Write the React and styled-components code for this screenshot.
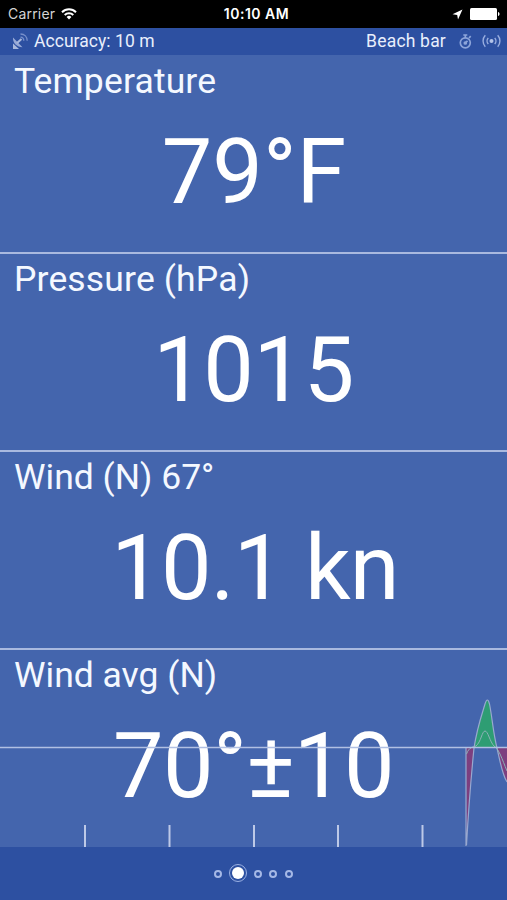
import styled, { createGlobalStyle } from "styled-components";

const GlobalStyle = createGlobalStyle`
	body {
		margin: 0;
		background: #000;
	}
`;

const Screen = styled.div`
	width: 507px;
	height: 900px;
	display: flex;
	flex-direction: column;
	overflow: hidden;
	background: #4465ad;
	color: #fff;
	font-family: Roboto, sans-serif;
`;

const StatusBar = styled.header`
	height: 28px;
	box-sizing: border-box;
	padding: 0 7px 0 8px;
	display: grid;
	grid-template-columns: 1fr auto 1fr;
	align-items: center;
	background: #000;
	font-family: Inter, sans-serif;
	font-size: 14px;
`;

const StatusGroup = styled.div`
	display: flex;
	align-items: center;
	justify-content: ${(props) => (props.$end ? "flex-end" : "flex-start")};
	gap: ${(props) => props.$gap}px;
`;

const Carrier = styled.span`
	color: #d4d4d4;
	font-size: 14px;
	line-height: 16px;
	margin-bottom: 1px;
	letter-spacing: 0.2px;
`;

const Clock = styled.span`
	padding-left: 5px;
	font-size: 14px;
	font-weight: 600;
	line-height: 16px;
	letter-spacing: 0.5px;
	margin-bottom: 1px;
`;

const InfoBar = styled.div`
	height: 27px;
	box-sizing: border-box;
	padding: 0 6px 1px 12px;
	display: flex;
	align-items: center;
	justify-content: space-between;
	background: #2d50a1;
`;

const InfoText = styled.span`
	color: #e9effc;
	font-size: 17.5px;
	line-height: 26px;
	letter-spacing: ${(props) => props.$spacing || 0}px;
	margin-right: ${(props) => props.$right || 0}px;
`;

const Panel = styled.section`
	position: relative;
	height: ${(props) => props.$height}px;
	box-sizing: border-box;
	padding-top: ${(props) => props.$top}px;
	border-bottom: ${(props) => (props.$last ? "none" : "2px solid #a9b9df")};
	display: flex;
	flex-direction: column;
`;

const PanelTitle = styled.h2`
	margin: 0 0 0 14px;
	color: #f4f8ff;
	font-size: 35.5px;
	font-weight: 400;
	line-height: 42px;
	letter-spacing: ${(props) => props.$spacing || 0}px;
	white-space: pre;
`;

const PanelValue = styled.div`
	margin-top: 18px;
	padding-left: ${(props) => props.$shift || 0}px;
	font-size: 90px;
	line-height: 106px;
	text-align: center;
	letter-spacing: ${(props) => props.$spacing || 0}px;
	white-space: pre;
`;

const Chart = styled.svg`
	position: absolute;
	left: 0;
	bottom: 0;
`;

const Footer = styled.footer`
	flex: 1;
	display: flex;
	align-items: center;
	justify-content: center;
	gap: 7.7px;
	background: #2d50a1;
`;

const Dot = styled.span`
	width: 8px;
	height: 8px;
	box-sizing: border-box;
	border: 2px solid #a5b8e6;
	border-radius: 50%;
	margin-top: 1px;
`;

const ActiveDot = styled.span`
	width: 18px;
	height: 18px;
	box-sizing: border-box;
	border: 1.5px solid #9bb1e3;
	border-radius: 50%;
	display: grid;
	place-items: center;
	margin: -1px -1px 0;

	&::before {
		content: "";
		width: 12px;
		height: 12px;
		border-radius: 50%;
		background: #fff;
	}
`;

const WifiIcon = () => (
	<svg width="16" height="12" viewBox="0 0 16 12" fill="none" stroke="#fff" strokeWidth="2">
		<path d="M1 4.2a10 10 0 0 1 14 0" />
		<path d="M3.7 7a6.2 6.2 0 0 1 8.6 0" />
		<path d="M8 11.4 5.6 9a3.5 3.5 0 0 1 4.8 0z" fill="#fff" stroke="none" />
	</svg>
);

const LocationIcon = () => (
	<svg width="11" height="11" viewBox="0 0 11 11">
		<path d="M10.5.5 6 10.5 5.2 5.9.5 5.2z" fill="#fff" />
	</svg>
);

const BatteryIcon = () => (
	<svg width="30" height="12" viewBox="0 0 30 12" fill="#fff">
		<rect width="27" height="12" rx="1.5" />
		<path d="M28 4c2 .5 2 3.5 0 4z" />
	</svg>
);

const SatelliteIcon = () => (
	<svg width="17" height="17" viewBox="0 0 17 17" fill="none" stroke="#7890cb">
		<path d="M1 4.5c-.5 5.5 4 9.7 9.5 9.7z" fill="#97a9d7" stroke="none" />
		<path d="M1 10.5v5.500h6z" fill="#a9b8dc" stroke="none" />
		<path d="m5 10 4.5-4" strokeWidth="2" stroke="#a9b8dc" />
		<path d="M8.5 4.2c2 .1 3.3 1.5 3.3 3.6M8.5 1c4 .1 6.7 2.8 6.7 6.8" strokeWidth="1.3" />
	</svg>
);

const StopwatchIcon = () => (
	<svg width="13" height="15" viewBox="0 0 13 15" fill="none" stroke="#8da5da" strokeWidth="1.7">
		<circle cx="6.3" cy="8.8" r="5" />
		<path d="M4.3 1h4M6.3 1v3M10 4l1.7-1.8M6.3 9l2.2-2.2" />
		<circle cx="6.3" cy="9" r="1" fill="#8da5da" />
	</svg>
);

const BroadcastIcon = () => (
	<svg width="19" height="14" viewBox="0 0 19 14" fill="none" stroke="#9aafe0" strokeWidth="1.4">
		<circle cx="9.5" cy="7" r="2" fill="#b3c3e9" stroke="none" />
		<path d="M6.3 4a4.3 4.3 0 0 0 0 6M12.7 4a4.3 4.3 0 0 1 0 6M3.3 1.3a8.4 8.4 0 0 0 0 11.4M15.7 1.3a8.4 8.4 0 0 1 0 11.4" />
	</svg>
);

const ticks = [85, 169.5, 254, 338, 422.5];

const WindChart = () => (
	<Chart width="507" height="197" viewBox="0 0 507 197">
		<path d="M466 98H474C472 118 469 151 466.5 195z" fill="#7d3f7f" />
		<path d="M497 98H507V132C502 124 500 111 497 98z" fill="#7d3f7f" />
		<path d="M474 98C477 78 482 64 485 54Q487.500 46 489.500 54C492 66 493 82 497 98z" fill="#2e9d73" />
		<path
			d="M466 196V98M466.500 195C469 151 472 118 474 98 477 78 482 64 485 54Q487.500 46 489.500 54C492 66 493 82 497 98 500 111 502 124 507 132"
			fill="none"
			stroke="#98a8cf"
			strokeWidth="1.2"
		/>
		<path
			d="M466.500 104C469 97 473 97 476 96 481 92 482 81 485 81S490 92 494 96C499 99 502 109 507 121"
			fill="none"
			stroke="#8bb2b7"
		/>
		<path d="M0 97.500H507" stroke="#b1c0e3" strokeWidth="1.5" />
		{ticks.map((x) => (
			<path key={x} d={`M${x} 175v22`} stroke="#bdc9e7" strokeWidth="2" />
		))}
	</Chart>
);

const readings = [
	{ title: "Temperature", value: "79°F", height: 199, top: 5, titleSpacing: 0.15, shift: 1 },
	{ title: "Pressure (hPa)", value: "1015", height: 198, top: 4, titleSpacing: 0.15, spacing: -0.4, shift: 0 },
	{ title: "Wind (N) 67°", value: "10.1 kn", height: 198, top: 4, spacing: -0.8, shift: 3 },
	{ title: "Wind avg (N)", value: "70°±10", height: 197, top: 4, spacing: -0.5, chart: true },
];

const App = () => {
	return (
		<Screen>
			<GlobalStyle />
			<StatusBar>
				<StatusGroup $gap={6}>
					<Carrier>Carrier</Carrier>
					<WifiIcon />
				</StatusGroup>
				<Clock>10:10 AM</Clock>
				<StatusGroup $end $gap={7}>
					<LocationIcon />
					<BatteryIcon />
				</StatusGroup>
			</StatusBar>
			<InfoBar>
				<StatusGroup $gap={5}>
					<SatelliteIcon />
					<InfoText $spacing={0.05}>Accuracy: 10 m</InfoText>
				</StatusGroup>
				<StatusGroup $gap={10}>
					<InfoText $spacing={0.2} $right={3}>
						Beach bar
					</InfoText>
					<StopwatchIcon />
					<BroadcastIcon />
				</StatusGroup>
			</InfoBar>
			{readings.map((item) => (
				<Panel key={item.title} $height={item.height} $top={item.top} $last={item.chart}>
					{item.chart && <WindChart />}
					<PanelTitle $spacing={item.titleSpacing}>{item.title}</PanelTitle>
					<PanelValue $spacing={item.spacing} $shift={item.shift}>
						{item.value}
					</PanelValue>
				</Panel>
			))}
			<Footer>
				<Dot />
				<ActiveDot />
				<Dot />
				<Dot />
				<Dot />
			</Footer>
		</Screen>
	);
};

export default App;
